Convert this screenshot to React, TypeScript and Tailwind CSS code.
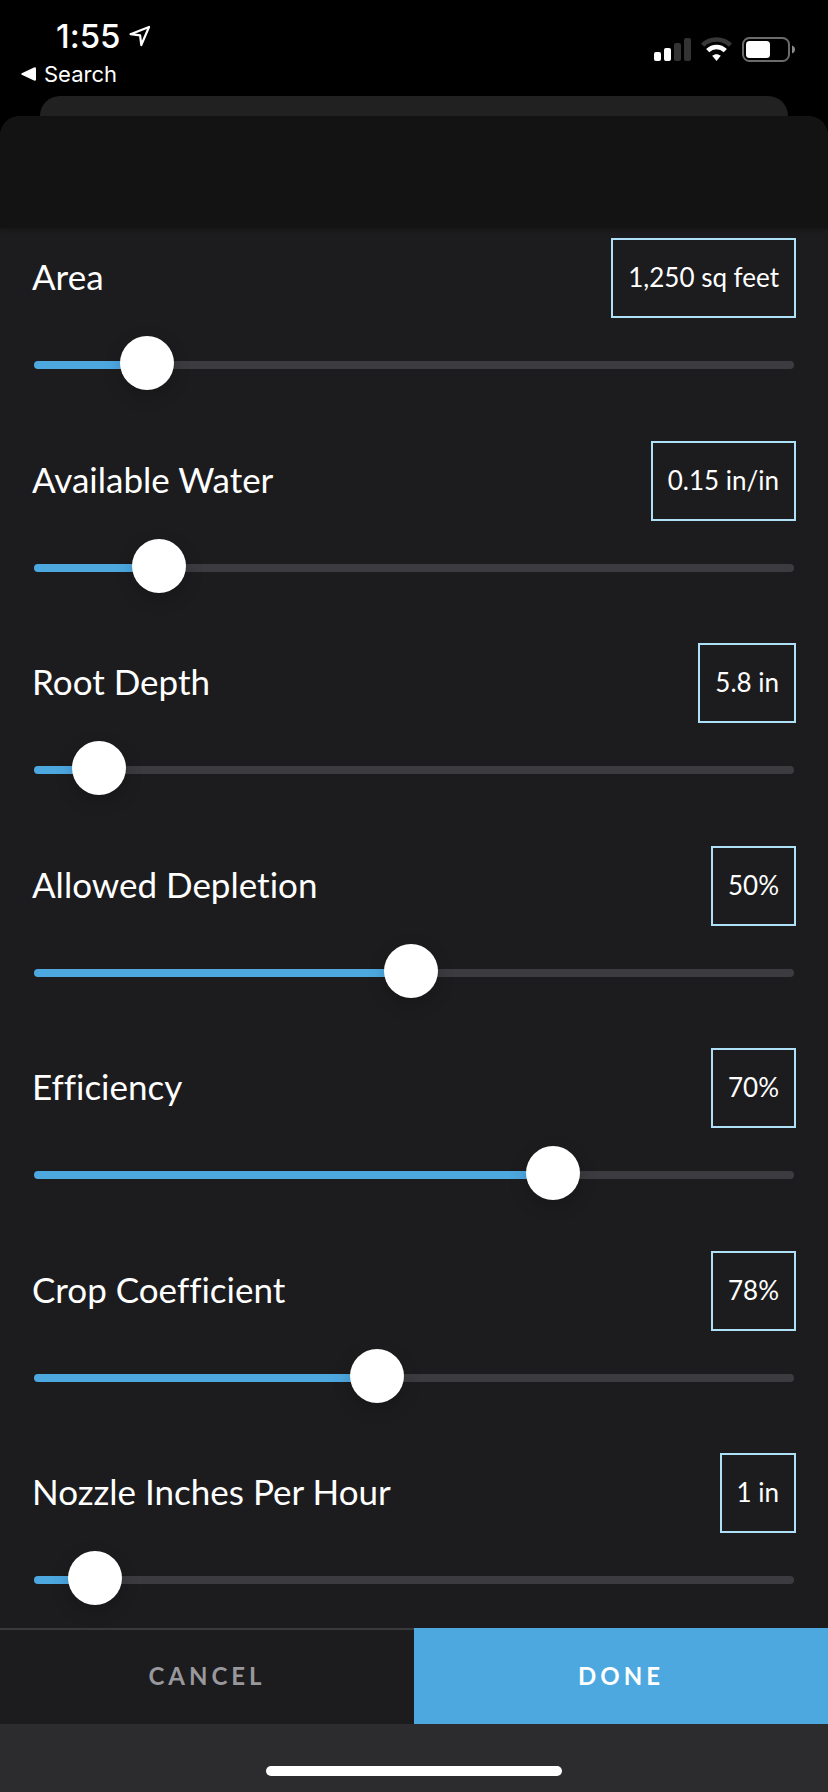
import { useState, type CSSProperties } from "react";

type Setting = {
  id: string;
  label: string;
  value: string;
  position: number;
};

const settings: Setting[] = [
  { id: "area", label: "Area", value: "1,250 sq feet", position: 12.2 },
  { id: "available-water", label: "Available Water", value: "0.15 in/in", position: 13.9 },
  { id: "root-depth", label: "Root Depth", value: "5.8 in", position: 5.4 },
  { id: "allowed-depletion", label: "Allowed Depletion", value: "50%", position: 49.6 },
  { id: "efficiency", label: "Efficiency", value: "70%", position: 69.7 },
  { id: "crop-coefficient", label: "Crop Coefficient", value: "78%", position: 44.8 },
  { id: "nozzle", label: "Nozzle Inches Per Hour", value: "1 in", position: 4.8 },
];

function StatusIcons() {
  return (
    <svg className="h-[26px] w-[142px]" viewBox="0 0 142 26" fill="none" aria-hidden="true">
      <rect x="0" y="15" width="7" height="9" rx="2" fill="#fff" />
      <rect x="10" y="11" width="7" height="13" rx="2" fill="#fff" />
      <rect x="20" y="6" width="7" height="18" rx="2" fill="#333" />
      <rect x="30" y="1" width="7" height="23" rx="2" fill="#333" />
      <path d="M48.6 8.2C56.5 .6 68.500 .6 76.400 8.2" stroke="#383838" strokeWidth="4.600" />
      <path d="M53.700 13.600C58.700 8.800 66.300 8.800 71.300 13.600" stroke="#fff" strokeWidth="4.600" />
      <path d="M58.200 18.800c2.500-2.100 6.100-2.100 8.600 0L62.500 24z" fill="#fff" />
      <rect x="89" y="1" width="46" height="23" rx="6.500" stroke="#6b6b6b" strokeWidth="2" />
      <rect x="92" y="4" width="24" height="17" rx="3.500" fill="#fff" />
      <path d="M138 8.500c2 .7 3 2.200 3 4s-1 3.300-3 4z" fill="#8a8a8a" />
    </svg>
  );
}

function StatusBar() {
  return (
    <header className="flex h-24 items-start justify-between bg-black pr-8 text-white font-['Inter',sans-serif]">
      <div className="flex flex-col pt-4">
        <div className="flex h-10 items-center gap-2 pl-14 text-[33px] leading-10 font-medium">
          <time>1:55</time>
          <svg className="size-[22px]" viewBox="0 0 22 22" fill="none" aria-hidden="true">
            <path
              d="M1.500 9.200 20 2 12.300 20l-1.200-9.600z"
              stroke="#fff"
              strokeWidth="2.200"
              strokeLinejoin="round"
            />
          </svg>
        </div>
        <a href="#search" className="flex h-9 items-center gap-2 pl-[21px] text-[22px] leading-9">
          <svg className="h-[14px] w-[15px]" viewBox="0 0 15 14" aria-hidden="true">
            <path d="M.8 6.200 13 .4Q15 0 15 1.600V12.400Q15 14 13 13.600L.8 7.800Q-.4 7 .8 6.200z" fill="#fff" />
          </svg>
          Search
        </a>
      </div>
      <div className="pt-[37px]">
        <StatusIcons />
      </div>
    </header>
  );
}

function SliderRow({ id, label, value, position }: Setting) {
  const [current, setCurrent] = useState(position);
  // The fill ends under the middle of the 54px thumb, whose travel is inset by half its width.
  const style = { "--fill": `calc(27px + (100% - 54px) * ${current / 100})` } as CSSProperties;

  return (
    <div className="flex flex-col gap-5">
      <div className="flex h-20 items-center justify-between">
        <label htmlFor={id} className="pb-1 text-[35px] leading-10 text-white">
          {label}
        </label>
        <button
          type="button"
          className="h-20 border-2 border-[#aee0f7] px-[15px] pb-0.5 text-[26px] leading-8 text-white"
        >
          {value}
        </button>
      </div>
      <div className="flex px-0.5">
        <input
          id={id}
          type="range"
          min={0}
          max={100}
          step={0.1}
          value={current}
          aria-valuetext={value}
          onChange={(event) => setCurrent(Number(event.target.value))}
          style={style}
          className="h-[54px] w-full cursor-pointer appearance-none bg-transparent [&::-webkit-slider-runnable-track]:h-2 [&::-webkit-slider-runnable-track]:rounded-full [&::-webkit-slider-runnable-track]:bg-[linear-gradient(to_right,#4da8e0_var(--fill),#3c3c40_var(--fill))] [&::-webkit-slider-thumb]:-mt-[25px] [&::-webkit-slider-thumb]:size-[54px] [&::-webkit-slider-thumb]:appearance-none [&::-webkit-slider-thumb]:rounded-full [&::-webkit-slider-thumb]:bg-white [&::-webkit-slider-thumb]:shadow-[0_6px_18px_rgba(0,0,0,0.2)]"
        />
      </div>
    </div>
  );
}

export default function App() {
  return (
    <div className="flex min-h-screen flex-col bg-black font-['Lato',sans-serif] [font-variant-ligatures:none]">
      <StatusBar />
      <div className="mx-10 h-5 rounded-t-[20px] bg-[#212121]" />
      <div className="flex grow flex-col overflow-hidden rounded-t-[20px] bg-[#1c1c1e]">
        <div className="z-10 h-28 shrink-0 bg-[#131313] shadow-[0_1px_4px_rgba(0,0,0,0.35)]" />
        <main className="flex grow flex-col justify-between px-8 pt-[10px] pb-[21px]">
          {settings.map((setting) => (
            <SliderRow key={setting.id} {...setting} />
          ))}
        </main>
        <div className="grid h-24 shrink-0 grid-cols-2 text-[24px] font-bold tracking-[4px]">
          <button type="button" className="text-[#98989d] shadow-[inset_0_2px_0_#39393b]">
            CANCEL
          </button>
          <button type="button" className="bg-[#4da8e0] text-white">
            DONE
          </button>
        </div>
        <footer className="flex h-[68px] shrink-0 items-end justify-center bg-[#2c2c2e] pb-4">
          <div className="h-[10px] w-[296px] rounded-full bg-white" />
        </footer>
      </div>
    </div>
  );
}
